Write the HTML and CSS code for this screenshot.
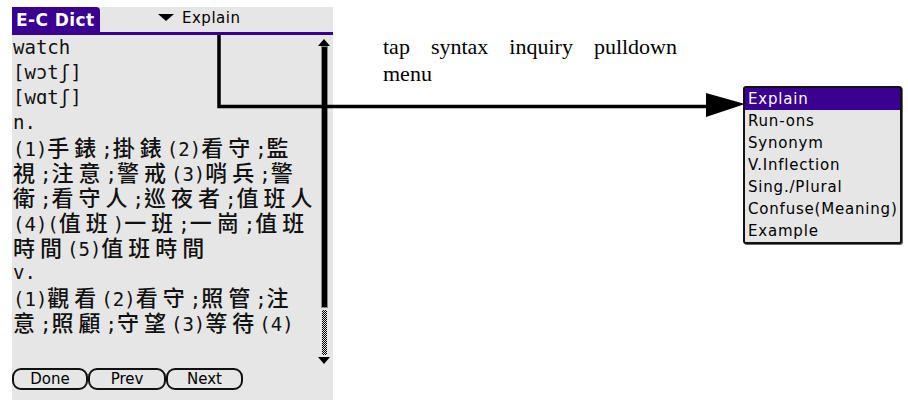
FILE: index.html
```html
<!DOCTYPE html>
<html lang="zh-Hant">
<head>
<meta charset="utf-8">
<title>E-C Dict</title>
<link rel="stylesheet" href="styles.css">
</head>
<body>
<div class="page">
  <div class="device">
    <div class="header">
      <div class="tab">E-C Dict</div>
      <div class="trigger">
        <svg class="tri" width="16" height="7" viewBox="0 0 16 7"><polygon points="0,0 16,0 8,7" fill="#000"/></svg>
        <span>Explain</span>
      </div>
    </div>
    <div class="main">
      <div class="text">
        <div class="ln">watch</div>
        <div class="ln">[wɔtʃ]</div>
        <div class="ln">[wɑtʃ]</div>
        <div class="ln">n.</div>
        <div class="ln">(1)<span class="c">手錶</span>;<span class="c">掛錶</span>(2)<span class="c">看守</span>;<span class="c">監</span></div>
        <div class="ln"><span class="c">視</span>;<span class="c">注意</span>;<span class="c">警戒</span>(3)<span class="c">哨兵</span>;<span class="c">警</span></div>
        <div class="ln"><span class="c">衛</span>;<span class="c">看守人</span>;<span class="c">巡夜者</span>;<span class="c">值班人</span></div>
        <div class="ln">(4)(<span class="c">值班</span>)<span class="c">一班</span>;<span class="c">一崗</span>;<span class="c">值班</span></div>
        <div class="ln"><span class="c">時間</span>(5)<span class="c">值班時間</span></div>
        <div class="ln">v.</div>
        <div class="ln">(1)<span class="c">觀看</span>(2)<span class="c">看守</span>;<span class="c">照管</span>;<span class="c">注</span></div>
        <div class="ln"><span class="c">意</span>;<span class="c">照顧</span>;<span class="c">守望</span>(3)<span class="c">等待</span>(4)</div>
      </div>
      <div class="scroll">
        <svg class="arrow-up" width="14" height="8" viewBox="0 0 14 8"><polygon points="1,8 7,1 13,8" fill="#000"/></svg>
        <div class="bar"></div>
        <div class="checker"></div>
        <svg class="arrow-down" width="14" height="8" viewBox="0 0 14 8"><polygon points="1,0 13,0 7,7" fill="#000"/></svg>
      </div>
    </div>
    <div class="buttons">
      <div class="btn b-done">Done</div>
      <div class="btn b-prev">Prev</div>
      <div class="btn b-next">Next</div>
    </div>
  </div>
  <div class="note">tap syntax inquiry pulldown menu</div>
</div>

<svg class="connector" width="908" height="402" viewBox="0 0 908 402">
  <polyline points="219,35 219,106.5 708,106.5" fill="none" stroke="#000" stroke-width="3.5"/>
  <polygon points="706,93 745,104 706,117" fill="#000"/>
</svg>

<div class="menu">
  <div class="item sel">Explain</div>
  <div class="item">Run-ons</div>
  <div class="item">Synonym</div>
  <div class="item">V.Inflection</div>
  <div class="item">Sing./Plural</div>
  <div class="item">Confuse(Meaning)</div>
  <div class="item">Example</div>
</div>
</body>
</html>
```

FILE: styles.css
```css
html, body {
  margin: 0;
  padding: 0;
  background: #ffffff;
}

body {
  width: 908px;
  height: 402px;
  overflow: hidden;
  position: relative;
}

.page {
  display: flex;
  align-items: flex-start;
}

.device {
  margin: 7px 0 0 12px;
  width: 321px;
  height: 393px;
  background: #e6e6e6;
  display: flex;
  flex-direction: column;
}

.header {
  height: 25px;
  border-bottom: 3px solid #3a0090;
  display: flex;
  align-items: flex-start;
}

.tab {
  width: 84px;
  height: 25px;
  padding-left: 4px;
  background: #3a0090;
  color: #ffffff;
  border-top-right-radius: 4px;
  font-family: "DejaVu Sans", sans-serif;
  font-weight: bold;
  font-size: 17px;
  line-height: 26px;
  letter-spacing: 0.4px;
}

.trigger {
  margin-left: 58px;
  display: flex;
  align-items: center;
  height: 22px;
  font-family: "DejaVu Sans", sans-serif;
  font-size: 15px;
  letter-spacing: 0.5px;
  color: #000;
}

.tri {
  margin-right: 8px;
  margin-top: -1px;
}

.main {
  height: 333px;
  display: flex;
}

.text {
  width: 304px;
  padding-left: 1px;
  color: #111;
  font-family: "DejaVu Sans Mono", "Noto Sans CJK TC", monospace;
  font-size: 19px;
}

.ln {
  height: 25px;
  line-height: 25px;
  white-space: nowrap;
}

.c {
  font-family: "Noto Sans CJK TC", sans-serif;
  font-weight: 500;
  font-size: 22px;
  letter-spacing: 5px;
  line-height: 22px;
}

.scroll {
  width: 14px;
  display: flex;
  flex-direction: column;
  align-items: center;
}

.arrow-up {
  margin-top: 3px;
  display: block;
}

.bar {
  margin-top: 1px;
  width: 5px;
  height: 260px;
  background: #000;
  box-shadow: 0 0 0 1px #8a8a8a;
}

.checker {
  margin-top: 3px;
  width: 5px;
  height: 45px;
  background: repeating-conic-gradient(#000 0 25%, #e6e6e6 0 50%) 0 0 / 2px 2px;
}

.arrow-down {
  margin-top: 2px;
  display: block;
}

.buttons {
  display: flex;
  height: 22px;
}

.btn {
  box-sizing: border-box;
  height: 22px;
  border: 2px solid #111;
  border-radius: 9px;
  font-family: "DejaVu Sans", sans-serif;
  font-size: 15px;
  line-height: 18px;
  text-align: center;
  color: #000;
}

.b-done { width: 76px; }
.b-prev { width: 78px; }
.b-next { width: 77px; }

.note {
  margin-left: 50px;
  margin-top: 33px;
  width: 294px;
  font-family: "Liberation Serif", serif;
  font-size: 22px;
  line-height: 27px;
  text-align: justify;
  text-align-last: left;
  color: #000;
}

.connector {
  position: absolute;
  left: 0;
  top: 0;
  pointer-events: none;
}

.menu {
  position: absolute;
  left: 743px;
  top: 86px;
  width: 155px;
  border: 2px solid #111;
  border-radius: 3px;
  background: #e6e6e6;
  box-shadow: 1px 1px 0 #666;
}

.item {
  height: 22px;
  line-height: 22px;
  padding-left: 3px;
  font-family: "DejaVu Sans", sans-serif;
  font-size: 15px;
  letter-spacing: 0.8px;
  color: #000;
  white-space: nowrap;
}

.item.sel {
  background: #3a0090;
  color: #fff;
}
```
